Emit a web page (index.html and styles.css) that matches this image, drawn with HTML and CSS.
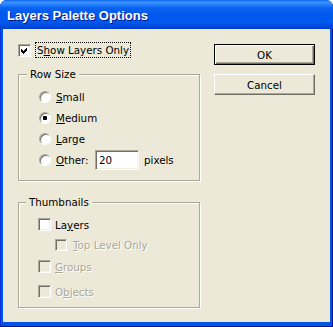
FILE: index.html
```html
<!DOCTYPE html>
<html lang="en">
<head>
    <meta charset="UTF-8">
    <title>Layers Palette Options</title>
    <link rel="stylesheet" href="styles.css">
</head>
<body>
    <div class="window">
        <div class="titlebar">
            <span class="title">Layers Palette Options</span>
        </div>
        <div class="client">
            <div class="left-col">
                <div class="row show-row">
                    <span class="checkbox">
                        <svg width="7" height="7" viewBox="0 0 7 7"><path d="M0 2 L2 4 L6 0 V3 L2 7 L0 5 Z" fill="#000" shape-rendering="crispEdges"/></svg>
                    </span>
                    <span class="focus">S<u>h</u>ow Layers Only</span>
                </div>

                <div class="group row-size">
                    <div class="legend">Row Size</div>
                    <div class="row opt"><span class="radio"></span><span class="label"><u>S</u>mall</span></div>
                    <div class="row opt"><span class="radio on"><span class="dot"></span></span><span class="label"><u>M</u>edium</span></div>
                    <div class="row opt"><span class="radio"></span><span class="label"><u>L</u>arge</span></div>
                    <div class="row opt">
                        <span class="radio"></span><span class="label other-label"><u>O</u>ther:</span>
                        <span class="field">20</span>
                        <span class="units">pixels</span>
                    </div>
                </div>

                <div class="group thumbs">
                    <div class="legend">Thumbnails</div>
                    <div class="row opt t1"><span class="checkbox"></span><span class="label">La<u>y</u>ers</span></div>
                    <div class="row opt t2 indent disabled"><span class="checkbox"></span><span class="label"><u>T</u>op Level Only</span></div>
                    <div class="row opt t3 disabled"><span class="checkbox"></span><span class="label"><u>G</u>roups</span></div>
                    <div class="row opt t4 disabled"><span class="checkbox"></span><span class="label">O<u>b</u>jects</span></div>
                </div>
            </div>

            <div class="buttons">
                <button class="btn default">OK</button>
                <button class="btn">Cancel</button>
            </div>
        </div>
    </div>
</body>
</html>
```
FILE: styles.css
```css
body {
    margin: 0;
    background-color: #fff;
    font-family: "DejaVu Sans", Verdana, sans-serif;
    font-size: 10.3px;
    color: #000;
}

.window {
    width: 333px;
    height: 327px;
    background-color: #0055e5;
    border-radius: 7px 7px 0 0;
    box-shadow: inset -1px -1px #00138c, inset 1px 0 #0831d9;
    display: flex;
    flex-direction: column;
    overflow: hidden;
}

.titlebar {
    height: 29px;
    flex-shrink: 0;
    display: flex;
    align-items: center;
    padding: 2px 0 0 7px;
    box-sizing: border-box;
    background: linear-gradient(to bottom, #0a5fef 0, #3d95ff 2px, #2a86ff 4px, #0b63ef 8px, #0058ee 14px, #005aef 22px, #0049d9 27px, #003dc8 29px);
}

.title {
    font-family: "Liberation Sans", Arial, sans-serif;
    font-weight: bold;
    font-size: 13px;
    color: #fff;
    text-shadow: 1px 1px #0a1883;
}

.client {
    height: 293px;
    margin: 0 3px 5px 3px;
    background-color: #ece9d8;
    display: flex;
    padding: 13px 0 0 15px;
    box-sizing: border-box;
}

.left-col {
    width: 182px;
}

.row {
    display: flex;
    align-items: center;
}

.show-row {
    height: 16px;
}

.focus {
    border: 1px dotted #000;
    padding: 0 1px;
    margin-left: 4px;
    line-height: 14px;
}

.checkbox {
    width: 13px;
    height: 13px;
    box-sizing: border-box;
    flex-shrink: 0;
    border: 1px solid;
    border-color: #aca899 #fff #fff #aca899;
    box-shadow: inset 1px 1px #716f64, inset -1px -1px #f1efe2;
    background-color: #fff;
    display: flex;
    align-items: center;
    justify-content: center;
}

.radio {
    width: 12px;
    height: 12px;
    box-sizing: border-box;
    flex-shrink: 0;
    border-radius: 50%;
    border: 1px solid;
    border-color: #aca899 #fff #fff #aca899;
    box-shadow: inset 1px 1px #716f64;
    background-color: #fff;
    display: flex;
    align-items: center;
    justify-content: center;
}

.dot {
    width: 4px;
    height: 4px;
    border-radius: 1px;
    background-color: #000;
}

.group {
    border: 1px solid #aca899;
    box-shadow: inset 1px 1px #fff, 1px 1px #fff;
    padding: 0 0 0 20px;
}

.legend {
    width: fit-content;
    margin: -7px 0 5px -12px;
    padding: 0 3px;
    line-height: 13px;
    background-color: #ece9d8;
}

.row-size {
    margin-top: 16px;
    padding-bottom: 10px;
}

.opt {
    height: 21px;
}

.label {
    margin-left: 5px;
}

.row-size .label {
    margin-left: 5px;
}

.other-label {
    width: 39px;
}

.field {
    width: 44px;
    height: 20px;
    box-sizing: border-box;
    border: 1px solid;
    border-color: #aca899 #fff #fff #aca899;
    box-shadow: inset 1px 1px #716f64, inset -1px -1px #f1efe2;
    background-color: #fff;
    padding: 3px 0 0 3px;
    line-height: 13px;
}

.units {
    margin-left: 5px;
}

.thumbs {
    margin-top: 21px;
    padding-left: 19px;
    padding-bottom: 5px;
}

.thumbs .label {
    margin-left: 4px;
}

.t2 {
    margin-top: -1px;
}

.t3 {
    margin-top: 1px;
}

.t4 {
    margin-top: 4px;
}

.indent {
    padding-left: 17px;
}

.indent .checkbox {
    width: 12px;
    height: 12px;
}

.indent .label {
    margin-left: 6px;
}

.disabled .checkbox {
    background-color: #ece9d8;
}

.disabled .label {
    color: #aca899;
    text-shadow: 1px 1px #fff;
}

.buttons {
    margin-left: 14px;
    padding-top: 2px;
    display: flex;
    flex-direction: column;
    gap: 9px;
}

.btn {
    width: 101px;
    height: 21px;
    box-sizing: border-box;
    font-family: inherit;
    font-size: inherit;
    color: #000;
    background-color: #ece9d8;
    border: 1px solid;
    border-color: #fff #716f64 #716f64 #fff;
    box-shadow: inset -1px -1px #aca899;
    padding: 0;
    margin: 0;
}

.btn.default {
    border-color: #000;
    box-shadow: inset 1px 1px #fff, inset -1px -1px #716f64, inset -2px -2px #aca899;
}
```
